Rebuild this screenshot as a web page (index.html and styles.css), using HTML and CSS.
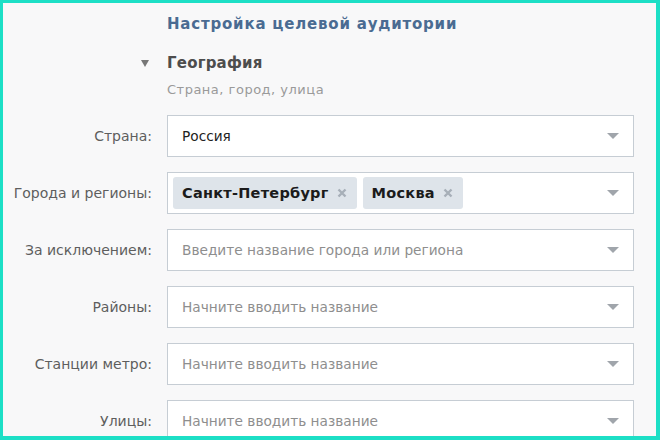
FILE: index.html
```html
<!DOCTYPE html>
<html lang="ru">
<head>
<meta charset="utf-8">
<link rel="stylesheet" href="styles.css">
</head>
<body>
<div class="screen">
  <div class="head">
    <h1 class="title">Настройка целевой аудитории</h1>
    <div class="section">
      <span class="caret"></span>
      <div>
        <div class="section-name">География</div>
        <div class="section-sub">Страна, город, улица</div>
      </div>
    </div>
  </div>
  <div class="form">
    <div class="label">Страна:</div>
    <div class="field"><span class="value">Россия</span><span class="arrow"></span></div>

    <div class="label">Города и регионы:</div>
    <div class="field tags-field">
      <span class="tag">Санкт-Петербург<svg class="x" width="10" height="10" viewBox="0 0 10 10"><path d="M1.5 1.5 L8.5 8.5 M8.5 1.5 L1.5 8.5"/></svg></span>
      <span class="tag">Москва<svg class="x" width="10" height="10" viewBox="0 0 10 10"><path d="M1.5 1.5 L8.5 8.5 M8.5 1.5 L1.5 8.5"/></svg></span>
      <span class="arrow"></span>
    </div>

    <div class="label">За исключением:</div>
    <div class="field"><span class="ph">Введите название города или региона</span><span class="arrow"></span></div>

    <div class="label">Районы:</div>
    <div class="field"><span class="ph">Начните вводить название</span><span class="arrow"></span></div>

    <div class="label">Станции метро:</div>
    <div class="field"><span class="ph">Начните вводить название</span><span class="arrow"></span></div>

    <div class="label">Улицы:</div>
    <div class="field"><span class="ph">Начните вводить название</span><span class="arrow"></span></div>
  </div>
</div>
</body>
</html>
```
FILE: styles.css
```css
html, body {
  margin: 0;
  padding: 0;
}
body {
  width: 660px;
  height: 440px;
  overflow: hidden;
  font-family: "DejaVu Sans", Verdana, sans-serif;
}
.screen {
  box-sizing: border-box;
  width: 660px;
  height: 440px;
  overflow: hidden;
  background: #f8f8f9;
  border-style: solid;
  border-color: #1ddfc6;
  border-width: 3px 4px 4px 3px;
}
.head {
  padding-left: 164px;
  padding-top: 11px;
}
.title {
  margin: 0;
  font-size: 15px;
  line-height: 20px;
  letter-spacing: 0.8px;
  font-weight: bold;
  color: #4a6b92;
}
.section {
  display: flex;
  margin-left: -26px;
  margin-top: 19px;
}
.caret {
  flex: none;
  width: 0;
  height: 0;
  border-left: 4px solid transparent;
  border-right: 4px solid transparent;
  border-top: 7px solid #777;
  margin-top: 7px;
  margin-right: 18px;
}
.section-name {
  font-size: 15px;
  line-height: 20px;
  letter-spacing: 0.2px;
  font-weight: bold;
  color: #4d4d4d;
}
.section-sub {
  font-size: 13px;
  line-height: 16px;
  letter-spacing: 0.5px;
  margin-top: 9px;
  color: #9a9a9a;
}
.form {
  display: grid;
  grid-template-columns: 149px 467px;
  column-gap: 15px;
  row-gap: 15px;
  grid-auto-rows: 42px;
  margin-top: 17px;
}
.label {
  display: flex;
  align-items: center;
  justify-content: flex-end;
  font-size: 14px;
  color: #5e5e5e;
}
.field {
  box-sizing: border-box;
  display: flex;
  align-items: center;
  background: #fff;
  border: 1px solid #c6cdd4;
  padding-left: 14px;
  padding-right: 14px;
  font-size: 13.7px;
}
.value {
  color: #222;
  flex: 1;
}
.ph {
  color: #8e8e8e;
  flex: 1;
}
.arrow {
  flex: none;
  width: 0;
  height: 0;
  border-left: 6px solid transparent;
  border-right: 6px solid transparent;
  border-top: 6px solid #a0a5ab;
  margin-left: auto;
}
.tags-field {
  padding-left: 5px;
  gap: 6px;
}
.tag {
  display: inline-flex;
  align-items: center;
  height: 32px;
  padding: 0 10px 0 9px;
  background: #dee4ea;
  border-radius: 3px;
  font-weight: bold;
  color: #1b1b1b;
  font-size: 14.5px;
  letter-spacing: 0.25px;
}
.x {
  flex: none;
  margin-left: 8px;
  stroke: #a7afb8;
  stroke-width: 2.4;
  fill: none;
}
```
